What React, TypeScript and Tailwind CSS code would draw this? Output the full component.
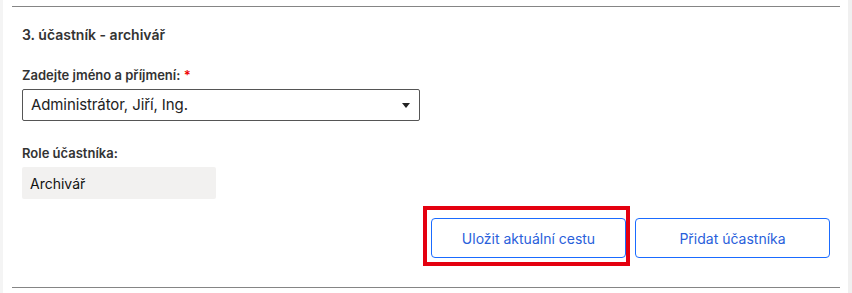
export default function App() {
  return (
    <div className="flex h-[293px] w-[852px] bg-white font-['Inter',sans-serif] text-[#222]">
      <div className="w-[3px] shrink-0 bg-[#f4f4f4]" />
      <div className="flex flex-1 flex-col pl-[9px] pr-[8px] pt-[6px]">
        <div className="h-px bg-[#858585]" />
        <section className="flex flex-col px-[10px]">
          <h3 className="mt-[19px] text-[14px] font-semibold leading-[18px] text-[#333]">
            3. účastník - archivář
          </h3>

          <label className="mt-[23px] text-[13px] font-semibold leading-[16px] text-[#333]">
            Zadejte jméno a příjmení: <span className="text-[#e00]">*</span>
          </label>
          <div className="mt-[6px] flex h-[32px] w-[398px] items-center justify-between rounded-[2px] border border-[#555] pl-[8px] pr-[9px]">
            <span className="text-[15px] tracking-[-0.1px] text-[#222]">Administrátor, Jiří, Ing.</span>
            <svg width="8" height="5" viewBox="0 0 8 5" aria-hidden="true">
              <path d="M0 0h8L4 5z" fill="#222" />
            </svg>
          </div>

          <label className="mt-[24px] text-[13px] font-semibold leading-[16px] text-[#333]">
            Role účastníka:
          </label>
          <div className="mt-[6px] flex h-[32px] w-[194px] items-center rounded-[2px] bg-[#f2f1f0] pl-[8px] text-[14px] text-[#111]">
            Archivář
          </div>

          {/* highlighted save button + add button */}
          <div className="mt-[7px] flex justify-end gap-[5px]">
            <div className="border-[4px] border-[#e4000f] pb-[4px] pl-[4px] pt-[8px]">
              <button
                type="button"
                className="h-[40px] w-[195px] rounded-[4px] border border-[#1a6bff] text-[14px] text-[#2a5fdb]"
              >
                Uložit aktuální cestu
              </button>
            </div>
            <div className="pt-[12px]">
              <button
                type="button"
                className="h-[40px] w-[195px] rounded-[4px] border border-[#1a6bff] text-[14px] text-[#2a5fdb]"
              >
                Přidat účastníka
              </button>
            </div>
          </div>
        </section>
        <div className="mt-auto mb-[5px] h-px bg-[#858585]" />
      </div>
      <div className="w-[4px] shrink-0 bg-[#f0f0f0]" />
    </div>
  );
}
